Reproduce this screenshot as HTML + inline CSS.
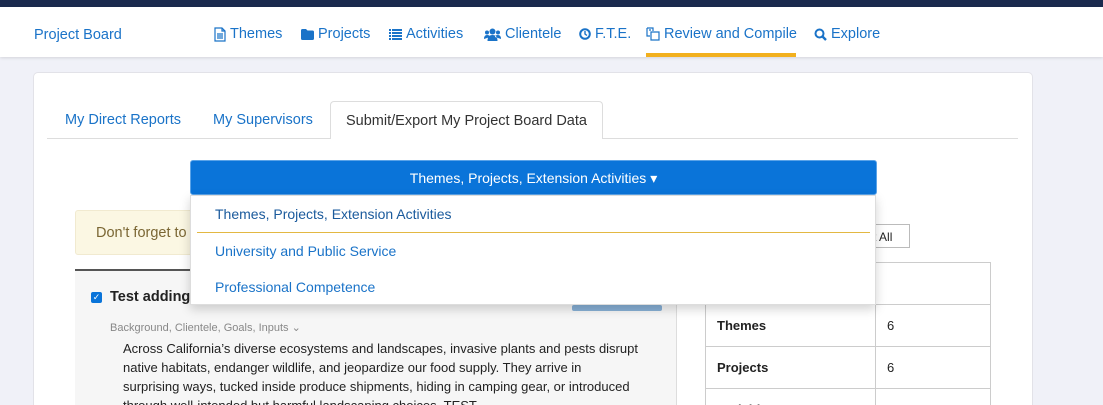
<!DOCTYPE html>
<html><head><style>
*{box-sizing:border-box;margin:0;padding:0}
html,body{width:1103px;height:405px;overflow:hidden}
body{background:#f0f1f8;font-family:"Liberation Sans",Arial,sans-serif;position:relative}
.abs{position:absolute}
.top{left:0;top:0;width:1103px;height:7px;background:#1b2a4e}
.nav{left:0;top:7px;width:1103px;height:50px;background:#fff;box-shadow:0 1px 3px rgba(0,0,0,.12)}
.nav span{position:absolute;top:19px;font-size:14.5px;color:#1a73c8;white-space:nowrap}
.nav svg{position:absolute;top:20px}
.card{left:33px;top:72px;width:1000px;height:333px;background:#fff;border:1px solid #e2e2e8;border-bottom:none;border-radius:5px 5px 0 0}
.tabs{left:47px;top:138px;width:971px;height:1px;background:#ddd}
.tab{top:112px;font-size:14.5px;color:#1a73c8}
.atab{left:330px;top:101px;width:273px;height:38px;background:#fff;border:1px solid #ddd;border-bottom:none;border-radius:4px 4px 0 0;font-size:14.5px;color:#333;padding:11px 0 0 15px}
.btn{left:190px;top:160px;width:687px;height:35px;background:#0a74d9;border:1px solid #5aa3e8;border-radius:3px;color:#fff;font-size:14px;text-align:center;padding-top:9px}
.menu{left:190px;top:195px;width:686px;height:110px;background:#fff;border:1px solid #ddd;box-shadow:0 4px 10px rgba(0,0,0,.18)}
.mi{left:215px;font-size:14px;color:#1a73c8}
.alert{left:75px;top:210px;width:130px;height:45px;background:#fbf7e3;border:1px solid #f1ead0;border-radius:3px;color:#7a6633;font-size:14.5px;padding:14px 0 0 20px}
.panel{left:75px;top:269px;width:602px;height:136px;background:#f6f6f6;border-top:2px solid #555;border-right:1px solid #ddd;overflow:hidden}
.tblw{left:705px;top:262px;width:286px;height:143px;overflow:hidden}
.tbl{border-collapse:collapse;font-size:13px;color:#222}
.tbl td{border:1px solid #ccc;height:42px;padding-left:11px}
</style></head><body>
<div class="abs top"></div>
<div class="abs nav">
<span style="left:34px;top:20px">Project Board</span>
<svg style="left:214px" width="12" height="15" viewBox="0 0 12 15"><path d="M1 1h7l3 3v10H1z M8 1v3h3 M3 7h6 M3 9h6 M3 11h6" fill="none" stroke="#1a73c8" stroke-width="1.2"/></svg>
<span style="left:230px">Themes</span>
<svg style="left:301px;top:22px" width="13" height="11" viewBox="0 0 13 11"><path d="M0 1.5Q0 0 1.5 0H5l1.5 1.5h5Q13 1.5 13 3v6.5Q13 11 11.5 11h-10Q0 11 0 9.5z" fill="#1a73c8"/></svg>
<span style="left:318px">Projects</span>
<svg style="left:389px;top:22px" width="13" height="11" viewBox="0 0 13 11"><path d="M0 0h2v2H0zM3 0h10v2H3zM0 3h2v2H0zM3 3h10v2H3zM0 6h2v2H0zM3 6h10v2H3zM0 9h2v2H0zM3 9h10v2H3z" fill="#1a73c8"/></svg>
<span style="left:406px">Activities</span>
<svg style="left:484px;top:21px" width="17" height="13" viewBox="0 0 17 13"><circle cx="8.5" cy="3.5" r="3" fill="#1a73c8"/><circle cx="3" cy="4.5" r="2" fill="#1a73c8"/><circle cx="14" cy="4.5" r="2" fill="#1a73c8"/><path d="M3.5 13q0-6 5-6t5 6zM0 11q0-4 3-4t3 2zM17 11q0-4-3-4t-3 2z" fill="#1a73c8"/></svg>
<span style="left:505px">Clientele</span>
<svg style="left:579px;top:21px" width="12" height="12" viewBox="0 0 12 12"><circle cx="6" cy="6" r="4.8" fill="none" stroke="#1a73c8" stroke-width="2"/><path d="M6 3v3l2 1.5" fill="none" stroke="#1a73c8" stroke-width="1.4"/></svg>
<span style="left:595px">F.T.E.</span>
<svg style="left:646px" width="14" height="14" viewBox="0 0 14 14"><path d="M1 1h6v3 M1 1v8h3 M5 5h8v8H5z M3 3h2" fill="none" stroke="#1a73c8" stroke-width="1.2"/></svg>
<span style="left:664px">Review and Compile</span>
<svg style="left:814px;top:21px" width="13" height="13" viewBox="0 0 13 13"><circle cx="5.5" cy="5.5" r="4" fill="none" stroke="#1a73c8" stroke-width="2"/><path d="M8.5 8.5l3.5 3.5" stroke="#1a73c8" stroke-width="2.4"/></svg>
<span style="left:831px">Explore</span>
<div style="position:absolute;left:646px;top:46px;width:150px;height:4px;background:#f2b01e"></div>
</div>
<div class="abs card"></div>
<div class="abs tabs"></div>
<div class="abs tab" style="left:65px">My Direct Reports</div>
<div class="abs tab" style="left:213px">My Supervisors</div>
<div class="abs atab">Submit/Export My Project Board Data</div>
<div class="abs alert">Don't forget to</div>
<div class="abs" style="left:850px;top:224px;width:60px;height:24px;border:1px solid #bbb;background:#fff;font-size:12px;padding:5px 0 0 0;color:#222">elect All</div>
<div class="abs panel">
<div class="abs" style="left:16px;top:21px;width:11px;height:11px;background:#0a74d9;border-radius:2px;color:#fff;font-size:9px;text-align:center;line-height:11px">✓</div>
<div class="abs" style="left:35px;top:18px;font-weight:bold;font-size:14.5px;color:#222">Test adding</div>
<div class="abs" style="left:497px;top:34px;width:90px;height:6px;background:#87b0d6;border-radius:2px"></div>
<div class="abs" style="left:35px;top:50px;font-size:11px;color:#888">Background, Clientele, Goals, Inputs ⌄</div>
<div class="abs" style="left:48px;top:68px;white-space:nowrap;font-size:13px;line-height:19px;color:#222">Across California’s diverse ecosystems and landscapes, invasive plants and pests disrupt<br>native habitats, endanger wildlife, and jeopardize our food supply. They arrive in<br>surprising ways, tucked inside produce shipments, hiding in camping gear, or introduced<br>through well-intended but harmful landscaping choices. TEST</div>
</div>
<div class="abs tblw"><table class="tbl">
<tr><td style="width:170px"></td><td style="width:115px"></td></tr>
<tr><td><b>Themes</b></td><td>6</td></tr>
<tr><td><b>Projects</b></td><td>6</td></tr>
<tr><td><b>Activities</b></td><td>21</td></tr>
</table></div>
<div class="abs btn">Themes, Projects, Extension Activities ▾</div>
<div class="abs menu"></div>
<div class="abs mi" style="top:206px;color:#1a5a9c">Themes, Projects, Extension Activities</div>
<div class="abs" style="left:197px;top:232px;width:673px;height:1px;background:#e3b842"></div>
<div class="abs mi" style="top:243px">University and Public Service</div>
<div class="abs mi" style="top:279px">Professional Competence</div>
</body></html>
